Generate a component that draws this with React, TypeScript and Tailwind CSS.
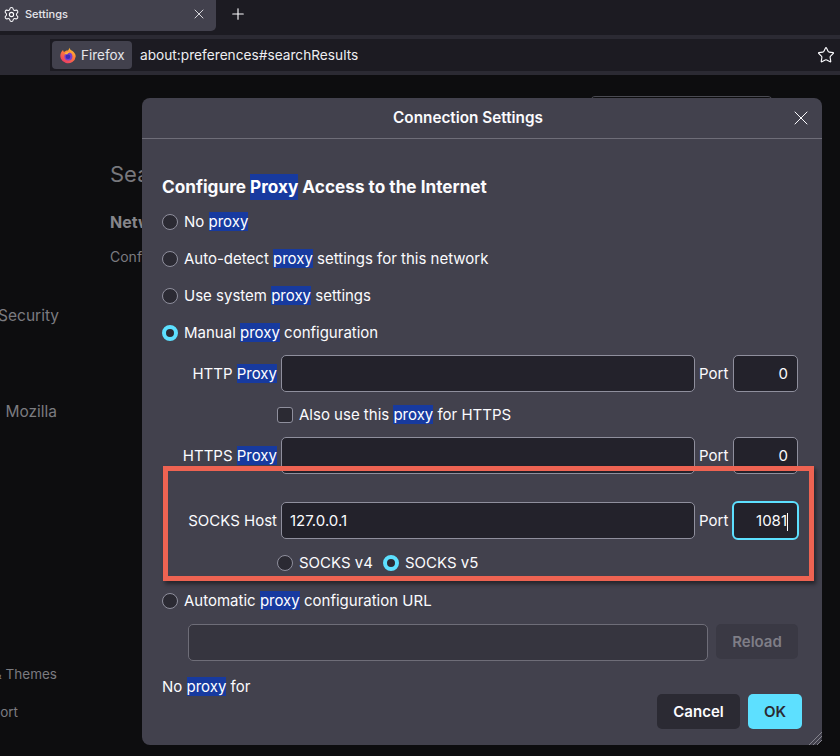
import { Settings, Star, X, Plus } from 'lucide-react'

function Hl({ children }: { children: string }) {
  return <span className="bg-[#173a9f] text-white">{children}</span>
}

function Radio({ checked, className }: { checked?: boolean; className?: string }) {
  if (checked) {
    return <span className={`w-4 h-4 shrink-0 rounded-full border-[4px] border-[#5de0ff] bg-[#2b2a33] ${className ?? ''}`} />
  }
  return <span className={`w-4 h-4 shrink-0 rounded-full border border-[#8f8f9d] bg-[#2b2a33] ${className ?? ''}`} />
}

function FirefoxLogo() {
  return (
    <svg width="16" height="17" viewBox="0 0 16 17">
      <defs>
        <linearGradient id="ffa" x1="0.8" y1="0" x2="0.2" y2="1">
          <stop offset="0" stopColor="#ffd02c" />
          <stop offset="0.45" stopColor="#ff7a3c" />
          <stop offset="1" stopColor="#e8336a" />
        </linearGradient>
      </defs>
      <path d="M9.2 0.4c0.3 1.5 1.6 2.4 3 3.4 2.2 1.6 3.5 3.6 3.5 5.6A7.7 7.6 0 1 1 1.2 5.2c0.5-0.9 1.2-1.6 1.9-2.1 0 0.9 0.4 1.5 1 1.9C4.9 3.8 6.5 3.3 8 3.4 8.8 2.6 9.3 1.6 9.2 0.4z" fill="url(#ffa)" />
      <circle cx="8.4" cy="9.6" r="4" fill="#7a3fd0" />
      <circle cx="8" cy="9.8" r="2.3" fill="#3d2cb5" />
      <path d="M4.4 7.2C5.4 5.4 7.8 4.6 9.6 5.4 8.4 5.6 7.6 6.4 7.4 7.2z" fill="#ffb83a" />
    </svg>
  )
}

function ProxyRow({
  label,
  value,
  port,
  focused,
  className,
}: {
  label: React.ReactNode
  value?: string
  port: string
  focused?: boolean
  className?: string
}) {
  return (
    <div className={`flex items-center h-[37px] ${className ?? ''}`}>
      <div className="w-[115px] pt-[2px] text-right shrink-0">{label}</div>
      <div className="ml-1 w-[414px] h-[37px] shrink-0 flex items-center px-2 pt-[2px] rounded-[5px] border border-[#8f8f9d] bg-[#23222b]">{value}</div>
      <div className="ml-1 w-[30px] pt-[2px] shrink-0">Port</div>
      {focused ? (
        <div className="ml-[3px] w-[67px] h-[39px] shrink-0 flex items-center justify-end pr-[9px] pt-[2px] rounded-[6px] border-2 border-[#5de0ff] bg-[#23222b]">
          {port}
          <span className="w-px h-[18px] bg-white" />
        </div>
      ) : (
        <div className="ml-1 w-[65px] h-[37px] shrink-0 flex items-center justify-end pr-[9px] pt-[2px] rounded-[5px] border border-[#8f8f9d] bg-[#23222b]">{port}</div>
      )}
    </div>
  )
}

export default function App() {
  return (
    <div className="relative w-[840px] h-[756px] overflow-hidden bg-[#0d0d0f] text-[#fbfbfe] font-['Inter',sans-serif] antialiased">
      {/* Tabs */}
      <div className="h-[35px] flex bg-[#1c1b22]">
        <div className="w-[216px] h-[31px] bg-[#42414d] rounded-br-[5px] flex items-center pl-[3px] pr-[9px] pb-[3px]">
          <Settings size={17} strokeWidth={1.5} className="shrink-0" />
          <span className="ml-[5px] text-[11px] font-medium text-[#e6e6ea]">Settings</span>
          <X size={16} strokeWidth={1.2} className="ml-auto -mt-[1px]" />
        </div>
        <div className="ml-[13px] h-[28px] flex items-center">
          <Plus size={18} strokeWidth={1.5} />
        </div>
      </div>

      {/* Url bar */}
      <div className="h-10 bg-[#2b2a33] flex items-center pl-[50px]">
        <div className="flex-1 h-8 bg-[#1c1b22] flex items-center pl-[2px] pr-[5px]">
          <div className="h-7 w-20 rounded-[4px] bg-[#42414d] flex items-center pl-2 gap-[5px]">
            <FirefoxLogo />
            <span className="pt-px text-[13.5px] text-[#e6e6ea]">Firefox</span>
          </div>
          <span className="ml-2 pt-px text-[13.7px] text-[#eeeef1]">about:preferences#searchResults</span>
          <Star size={18} strokeWidth={1.5} className="ml-auto" />
        </div>
      </div>

      {/* Page behind the dialog */}
      <div className="flex h-[681px] text-[#7b7b80]">
        <div className="w-[59px] shrink-0 overflow-hidden flex flex-col items-end whitespace-nowrap text-[15.5px]">
          <div className="mt-[231px] h-[20px] leading-5">Privacy &amp; Security</div>
          <div className="mt-[76px] h-[20px] leading-5 mr-[2px]">Mozilla</div>
          <div className="mt-[242px] h-[20px] leading-5 text-[13.5px] mr-[2px]">Extensions &amp; Themes</div>
          <div className="mt-[18px] h-[20px] leading-5 text-[13.5px] mr-[41px]">Firefox Support</div>
        </div>
        <div className="relative flex-1 pl-[51px] whitespace-nowrap">
          <div className="mt-[85px] text-[22px] leading-7 text-[#77777c]">Search Results</div>
          <div className="mt-[24px] text-[16px] leading-5 font-bold text-[#85858a]">Network Settings</div>
          <div className="mt-[15px] text-[14px] leading-5">Configure how Firefox connects</div>
          <div className="absolute left-[531px] top-[21px] w-[183px] h-8 rounded-[5px] border border-[#4a4a52]" />
        </div>
      </div>

      {/* Dialog */}
      <div className="absolute left-[142px] top-[98px] w-[680px] h-[647px] rounded-[8px] bg-[#42414d] text-[15px]">
        <div className="h-[41px] flex items-center justify-center pr-[28px] border-b border-[#6e6d78] relative">
          <span className="text-[15.3px] font-semibold">Connection Settings</span>
          <X size={24} strokeWidth={1} className="absolute right-[9px] top-[8px]" />
        </div>

        <div className="pl-5 pr-6">
          <div className="mt-[37px] h-[22px] flex items-center text-[17.2px] font-bold whitespace-pre">
            Configure <Hl>Proxy</Hl> Access to the Internet
          </div>

          <div className="mt-[14px] h-[20px] flex items-center gap-[6px] whitespace-pre">
            <Radio /><span>No <Hl>proxy</Hl></span>
          </div>
          <div className="mt-[17px] h-[20px] flex items-center gap-[6px] whitespace-pre">
            <Radio /><span>Auto-detect <Hl>proxy</Hl> settings for this network</span>
          </div>
          <div className="mt-[17px] h-[20px] flex items-center gap-[6px] whitespace-pre">
            <Radio /><span>Use system <Hl>proxy</Hl> settings</span>
          </div>
          <div className="mt-[17px] h-[20px] flex items-center gap-[6px] whitespace-pre">
            <Radio checked /><span>Manual <Hl>proxy</Hl> configuration</span>
          </div>

          <ProxyRow className="mt-[12px]" label={<span className="whitespace-pre">HTTP <Hl>Proxy</Hl></span>} port="0" />

          <div className="mt-[13px] ml-[115px] h-[20px] flex items-center gap-[6px] whitespace-pre">
            <span className="w-4 h-4 rounded-[3px] border border-[#8f8f9d] bg-[#2b2a33]" />
            <span>Also use this <Hl>proxy</Hl> for HTTPS</span>
          </div>

          <ProxyRow className="mt-[12px]" label={<span className="whitespace-pre">HTTPS <Hl>Proxy</Hl></span>} port="0" />

          <ProxyRow className="mt-[28px]" label="SOCKS Host" value="127.0.0.1" port="1081" focused />

          <div className="mt-[14px] ml-[115px] h-[20px] flex items-center gap-[6px] whitespace-pre">
            <Radio /><span>SOCKS v4</span>
            <Radio checked className="ml-[4px]" /><span>SOCKS v5</span>
          </div>

          <div className="mt-[18px] h-[20px] flex items-center gap-[6px] whitespace-pre">
            <Radio /><span>Automatic <Hl>proxy</Hl> configuration URL</span>
          </div>

          <div className="mt-[13px] ml-[26px] flex gap-2">
            <div className="w-[520px] h-[37px] rounded-[5px] border border-[#6e6d78] bg-[#36353f]" />
            <div className="w-[82px] h-[35px] pt-px rounded-[5px] bg-[#3a3944] flex items-center justify-center font-semibold text-[#7f7e87]">Reload</div>
          </div>

          <div className="mt-[16px] h-[20px] flex items-center whitespace-pre"><span>No <Hl>proxy</Hl> for</span></div>

          <div className="mt-[-3px] flex justify-end gap-2 -mr-[4px]">
            <div className="w-[83px] h-[35px] pt-px rounded-[5px] bg-[#2b2a33] flex items-center justify-center font-semibold">Cancel</div>
            <div className="w-[54px] h-[35px] pt-px rounded-[5px] bg-[#5de0ff] flex items-center justify-center font-semibold text-[#2b2a33]">OK</div>
          </div>
        </div>

        {/* Resize grip */}
        <svg className="absolute right-0 bottom-0" width="13" height="13" viewBox="0 0 13 13" stroke="#85848d" strokeWidth="1">
          <path d="M13 0L0 13M13 4L4 13M13 8L8 13" />
        </svg>
      </div>

      {/* Annotation box */}
      <div className="absolute left-[163px] top-[466px] w-[651px] h-[115px] border-[5px] border-[#ee6352] shadow-[2px_3px_4px_rgba(0,0,0,0.45)] pointer-events-none" />
    </div>
  )
}
